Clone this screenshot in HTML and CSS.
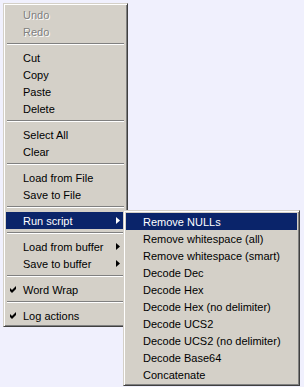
FILE: index.html
```html
<!DOCTYPE html>
<html lang="en">
<head>
<meta charset="UTF-8">
<meta name="viewport" content="width=device-width, initial-scale=1.0">
<title>Context menu</title>
<link rel="stylesheet" href="styles.css">
</head>
<body>

<div class="menu main">
    <div class="item disabled"><span class="gutter"></span><span class="label">Undo</span></div>
    <div class="item disabled"><span class="gutter"></span><span class="label">Redo</span></div>
    <div class="sep"></div>
    <div class="item"><span class="gutter"></span><span class="label">Cut</span></div>
    <div class="item"><span class="gutter"></span><span class="label">Copy</span></div>
    <div class="item"><span class="gutter"></span><span class="label">Paste</span></div>
    <div class="item"><span class="gutter"></span><span class="label">Delete</span></div>
    <div class="sep"></div>
    <div class="item"><span class="gutter"></span><span class="label">Select All</span></div>
    <div class="item"><span class="gutter"></span><span class="label">Clear</span></div>
    <div class="sep"></div>
    <div class="item"><span class="gutter"></span><span class="label">Load from File</span></div>
    <div class="item"><span class="gutter"></span><span class="label">Save to File</span></div>
    <div class="sep"></div>
    <div class="item active has-sub">
        <span class="gutter"></span><span class="label">Run script</span>
        <svg class="arrow" width="4" height="7" viewBox="0 0 4 7"><polygon points="0,0 4,3.5 0,7"/></svg>
    </div>
    <div class="sep"></div>
    <div class="item has-sub">
        <span class="gutter"></span><span class="label">Load from buffer</span>
        <svg class="arrow" width="4" height="7" viewBox="0 0 4 7"><polygon points="0,0 4,3.5 0,7"/></svg>
    </div>
    <div class="item has-sub">
        <span class="gutter"></span><span class="label">Save to buffer</span>
        <svg class="arrow" width="4" height="7" viewBox="0 0 4 7"><polygon points="0,0 4,3.5 0,7"/></svg>
    </div>
    <div class="sep"></div>
    <div class="item">
        <span class="gutter"><svg class="check" width="7" height="7" viewBox="0 0 7 7"><polygon points="0,2 2,4 6,0 6,3 2,7 0,5"/></svg></span>
        <span class="label">Word Wrap</span>
    </div>
    <div class="sep"></div>
    <div class="item">
        <span class="gutter"><svg class="check" width="7" height="7" viewBox="0 0 7 7"><polygon points="0,2 2,4 6,0 6,3 2,7 0,5"/></svg></span>
        <span class="label">Log actions</span>
    </div>

    <!-- submenu of "Run script" -->
    <div class="menu sub">
        <div class="item active"><span class="gutter"></span><span class="label">Remove NULLs</span></div>
        <div class="item"><span class="gutter"></span><span class="label">Remove whitespace (all)</span></div>
        <div class="item"><span class="gutter"></span><span class="label">Remove whitespace (smart)</span></div>
        <div class="item"><span class="gutter"></span><span class="label">Decode Dec</span></div>
        <div class="item"><span class="gutter"></span><span class="label">Decode Hex</span></div>
        <div class="item"><span class="gutter"></span><span class="label">Decode Hex (no delimiter)</span></div>
        <div class="item"><span class="gutter"></span><span class="label">Decode UCS2</span></div>
        <div class="item"><span class="gutter"></span><span class="label">Decode UCS2 (no delimiter)</span></div>
        <div class="item"><span class="gutter"></span><span class="label">Decode Base64</span></div>
        <div class="item"><span class="gutter"></span><span class="label">Concatenate</span></div>
    </div>
</div>

</body>
</html>
```

FILE: styles.css
```css
html {
    height: 100%;
}
body {
    box-sizing: border-box;
    min-height: 100%;
    margin: 0;
    padding: 3px;
    background-color: #f0f0fd;
    font-family: "Liberation Sans", Arial, sans-serif;
    font-size: 11px;
}
.menu {
    box-sizing: border-box;
    padding: 2px;
    border: 1px solid;
    border-color: #d4d0c8 #404040 #404040 #d4d0c8;
    box-shadow: inset 1px 1px 0 #fff, inset -1px -1px 0 #808080;
    background-color: #d4d0c8;
    color: #000;
}
.main {
    position: relative;
    width: 125px;
}
.sub {
    position: absolute;
    left: 119px;
    top: 206px;
    z-index: 1;
    width: 177px;
}
.item {
    display: flex;
    align-items: center;
    height: 17px;
    padding-right: 5px;
    white-space: nowrap;
}
.gutter {
    display: flex;
    align-items: center;
    width: 17px;
    flex: none;
}
.label {
    flex: 1;
}
.item.active {
    background-color: #0a246a;
    color: #fff;
}
.item.active > .arrow {
    fill: #fff;
}
.item.disabled {
    color: #808080;
    text-shadow: 1px 1px 0 #fff;
}
.arrow {
    fill: #000;
    flex: none;
}
.check {
    margin-left: 4px;
    fill: #000;
}
.sep {
    height: 1px;
    margin: 3px 1px 4px;
    border-top: 1px solid #808080;
    background-color: #fff;
}
```
